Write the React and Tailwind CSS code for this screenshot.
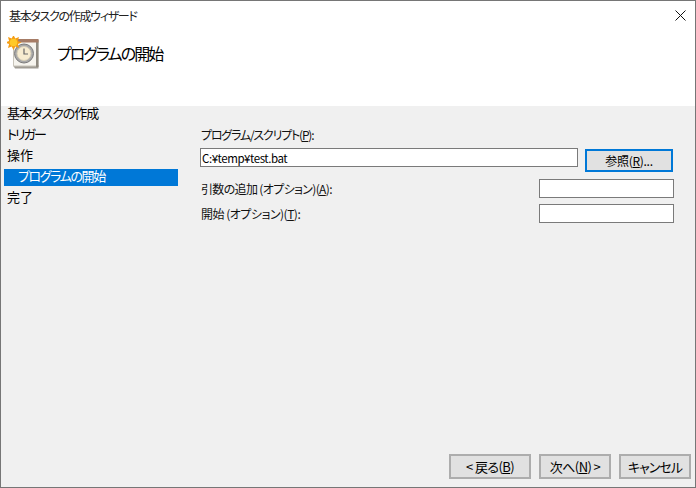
const font = { fontFamily: '"Noto Sans CJK JP", "Liberation Sans", sans-serif', fontFeatureSettings: '"palt"' };

function TaskIcon() {
  return (
    <svg width="34" height="36" viewBox="0 0 34 36" className="block">
      <path d="M6 29 L8 32.5 L31.5 32.5 L31.5 29 Z" fill="#a09c94" />
      <rect x="6.5" y="4" width="24.5" height="26" fill="#f6f4ee" stroke="#c9c5bb" />
      <rect x="29" y="4" width="2.5" height="27" fill="#8f8a80" />
      <rect x="8" y="3" width="23.5" height="3.5" fill="#a67c66" />
      <circle cx="17" cy="17.5" r="9.5" fill="#a8a8a8" stroke="#7b7b7b" />
      <circle cx="17" cy="17.5" r="7" fill="#f7ecd0" stroke="#d5cdb6" />
      <path d="M17 12.5 V18 H21" fill="none" stroke="#666" strokeWidth="1.2" />
      <path d="M6.5 -1 L8.3 2.6 L12 1 L10.9 4.9 L14.5 6.5 L10.9 8.1 L12 12 L8.3 10.4 L6.5 14 L4.7 10.4 L1 12 L2.1 8.1 L-1.5 6.5 L2.1 4.9 L1 1 L4.7 2.6 Z" fill="#f59c12" />
      <circle cx="6.5" cy="6.5" r="3.8" fill="#ffc928" />
    </svg>
  );
}

function NavItem({ label, selected, className = '' }) {
  if (selected) {
    return <div className={`h-[17px] ml-[3px] pl-[14px] bg-[#0078d7] text-white text-[13px] leading-[14px] mb-[4px] ${className}`}>{label}</div>;
  }
  return <div className={`h-[17px] pl-[6px] text-[13px] leading-[14px] text-black mb-[4px] ${className}`}>{label}</div>;
}

function FootButton({ className, children }) {
  return (
    <button className={`h-[25px] border-2 border-[#adadad] bg-[#e1e1e1] text-[13px] leading-none text-black ${className}`}>
      {children}
    </button>
  );
}

export default function App() {
  return (
    <div style={font} className="w-[696px] h-[488px] flex flex-col border border-[#767676] bg-[#f0f0f0] overflow-hidden">
      <div className="h-[105px] bg-white shrink-0">
        <div className="h-[29px] flex items-center justify-between pl-[8px] pr-[9px]">
          <span className="text-[12px] tracking-[-1.3px] text-[#222]">基本タスクの作成ウィザード</span>
          <svg width="11" height="11" viewBox="0 0 11 11" className="block">
            <path d="M0.5 0.5 L10.5 10.5 M10.5 0.5 L0.5 10.5" stroke="#111" strokeWidth="1" fill="none" />
          </svg>
        </div>
        <div className="flex items-start pl-[6px] pt-[6px]">
          <TaskIcon />
          <span className="ml-[16px] mt-[6px] text-[16px] leading-[22px] tracking-[-1.9px] text-black">プログラムの開始</span>
        </div>
      </div>

      <div className="flex-1 flex min-h-0">
        <div className="w-[177px] shrink-0">
          <NavItem label="基本タスクの作成" className="tracking-[-1px]" />
          <NavItem label="トリガー" className="tracking-[-2px]" />
          <NavItem label="操作" />
          <NavItem label="プログラムの開始" selected className="tracking-[-1.4px]" />
          <NavItem label="完了" />
        </div>

        <div className="flex-1 flex flex-col">
          <div className="pl-[22px] pr-[21px] pt-[22px] flex-1">
            <div className="text-[12px] leading-[14px] tracking-[-1.2px] text-[#111] pl-[1px]">
              プログラム/スクリプト(<u>P</u>):
            </div>
            <div className="flex items-start gap-[7px] mt-[6px]">
              <input
                readOnly
                value="C:¥temp¥test.bat"
                className="w-[378px] h-[19px] border border-[#7a7a7a] bg-white px-[1px] text-[11.5px] tracking-[-0.45px] text-black outline-none"
              />
              <button className="mt-[1px] w-[88px] h-[23px] border-2 border-[#0078d7] bg-[#e1e1e1] text-[12px] tracking-[-0.3px] leading-none text-black">
                参照(<u>R</u>)...
              </button>
            </div>
            <div className="flex items-center justify-between mt-[7px] h-[19px]">
              <span className="text-[12px] tracking-[-0.65px] pl-[1px] text-[#111]">引数の追加 (オプション)(<u>A</u>):</span>
              <input readOnly className="w-[135px] h-[19px] border border-[#7a7a7a] bg-white outline-none" />
            </div>
            <div className="flex items-center justify-between mt-[6px] h-[19px]">
              <span className="text-[12px] tracking-[-0.5px] pl-[1px] text-[#111]">開始 (オプション)(<u>T</u>):</span>
              <input readOnly className="w-[135px] h-[19px] border border-[#7a7a7a] bg-white outline-none" />
            </div>
          </div>
        </div>
      </div>

      <div className="h-[29px] shrink-0 flex justify-end gap-[8px] pr-[4px] -mt-[33px] mb-[4px]">
        <FootButton className="w-[82px] tracking-[-0.6px]">&lt; 戻る(<u>B</u>)</FootButton>
        <FootButton className="w-[72px] tracking-[-0.6px]">次へ(<u>N</u>) &gt;</FootButton>
        <FootButton className="w-[72px] tracking-[-1px]">キャンセル</FootButton>
      </div>
    </div>
  );
}
